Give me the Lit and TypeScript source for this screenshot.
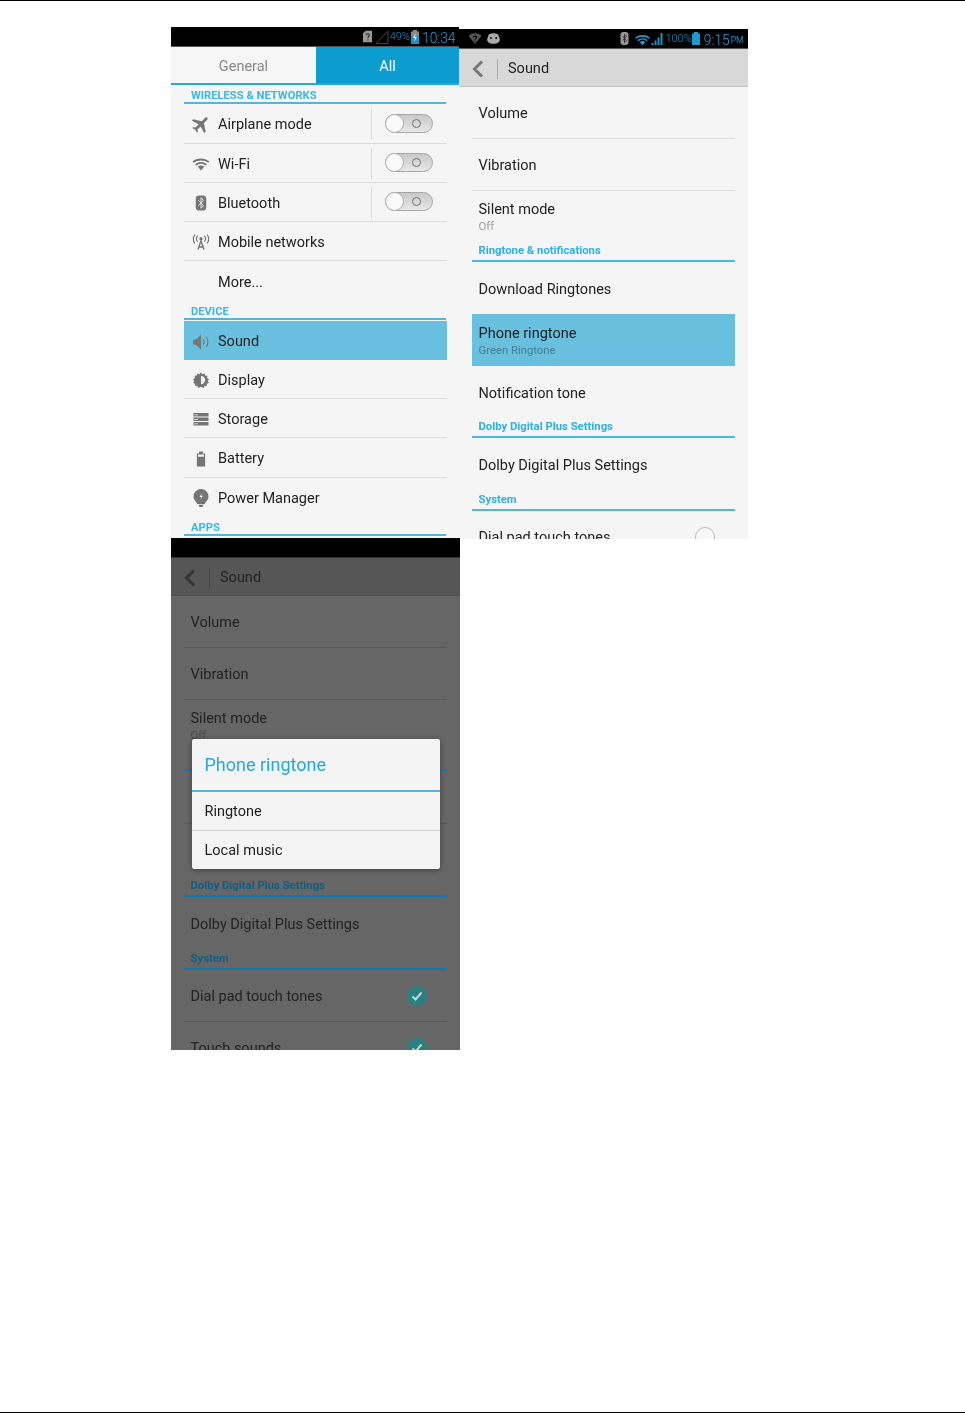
import { LitElement, html, css, svg, nothing } from "lit";
import { customElement } from "lit/decorators.js";

const icons: Record<string, unknown> = {
  plane: svg`<g transform="rotate(45 12 12) translate(12 12) scale(1.12) translate(-12 -12)"><path d="M22.500 17v-2.400L13.700 9V3.300C13.700 2.300 13 1.500 12 1.500s-1.700.8-1.700 1.800V9L1.500 14.600V17l8.800-2.700v5.400L8 21.300v1.500l4-1.100 4 1.100v-1.500l-2.300-1.600v-5.400z"/></g>`,
  wifi: svg`<g fill="none" stroke="currentColor" stroke-width="2.400"><path d="M1.500 9.500C7 4.800 17 4.800 22.500 9.500"/><path d="M4.800 13.200C9 9.800 15 9.800 19.200 13.200"/></g><path d="M7.600 15.400c2.600-1.900 6.200-1.900 8.800 0L12 20.500z"/>`,
  bt: svg`<rect x="5" y="2" width="14" height="20" rx="4.500"/><path d="M8.600 8.400l6.600 7.200-3.200 3.400V5l3.200 3.400-6.600 7.200" fill="none" stroke="#e8e8e8" stroke-width="1.300"/>`,
  mobile: svg`<path d="M12 7.500l5 14.500h-2l-.8-2.500H9.800L9 22H7zM12 12.500l-1.400 5h2.800z"/><circle cx="12" cy="7.500" r="2.200"/><g fill="none" stroke="currentColor" stroke-width="1.500"><path d="M7.500 3.500c-2 2.400-2 5.600 0 8M16.500 3.500c2 2.400 2 5.600 0 8"/><path d="M4 2c-3 3.400-3 8.600 0 12M20 2c3 3.400 3 8.600 0 12"/></g>`,
  sound: svg`<path d="M1.500 8.500h4L12 2v20l-6.500-6.500h-4z"/><g fill="none" stroke="currentColor" stroke-width="1.400"><path d="M15 8.500c1.500 2.200 1.500 4.800 0 7"/><path d="M19 5.500c2.800 4 2.800 9 0 13"/></g>`,
  display: svg`<path d="M12 1.500l2 2.800 2.800-1.100.7 2.900 3 .3-.4 3 2.600 1.600L21 13.300l1.500 2.600-2.700 1.200v3l-3 0L15.500 22.800 12 21l-3.500 1.800-1.300-2.700-3 0v-3L1.500 15.900 3 13.300 1.300 11l2.600-1.600-.4-3 3-.3.7-2.900L10 4.300z"/><path d="M12 6.500a5.500 5.500 0 0 1 0 11z" fill="#f0f0f0"/>`,
  storage: svg`<path d="M2 4h20v4.500H2zM2 10h20v4.500H2zM2 16h20v4.500H2z"/><path d="M3 6h5v1H3zM3 12h5v1H3zM3 18h5v1H3z" fill="#f5f5f5"/>`,
  battery: svg`<path d="M9.500 2h5v2.500h3V22h-11V4.500h3z"/><path d="M8 6h8v3H8z" fill="#f5f5f5"/>`,
  bulb: svg`<path d="M12 0a10 10 0 0 0-10 10c0 3.800 2.200 6 4.500 8.500V20h11v-1.500c2.300-2.500 4.500-4.700 4.500-8.500a10 10 0 0 0-10-10z"/><path d="M8.500 21h7L14 24h-4z"/><path d="M13.500 5l-3.500 5.500h2.500L11 14.500l3.500-5.500H12z" fill="#f5f5f5"/>`,
};

const icon = (n: string) => html`<svg class="ico" viewBox="0 0 24 24" fill="currentColor">${icons[n]}</svg>`;

const rowsWireless = [
  { i: "plane", t: "Airplane mode", sw: true },
  { i: "wifi", t: "Wi-Fi", sw: true },
  { i: "bt", t: "Bluetooth", sw: true },
  { i: "mobile", t: "Mobile networks" },
  { t: "More...", last: true },
];
const rowsDevice = [
  { i: "sound", t: "Sound", on: true },
  { i: "display", t: "Display" },
  { i: "storage", t: "Storage" },
  { i: "battery", t: "Battery" },
  { i: "bulb", t: "Power Manager", last: true },
];

@customElement("app-root")
export class AppRoot extends LitElement {
  static styles = css`
    :host {
      display: block;
      height: 1413px;
      box-sizing: border-box;
      border-top: 1px solid #000;
      border-bottom: 1px solid #000;
      background: #fff;
      font-family: Roboto, "Liberation Sans", sans-serif;
      overflow: hidden;
    }
    .page {
      display: grid;
      grid-template-columns: 288px 289px;
      grid-template-rows: 511px 512px;
      padding: 26px 0 0 171px;
    }
    .screen {
      --bg: #f5f5f5;
      --ink: #222;
      --head: #d8d8d8;
      --head-line: #c4c4c4;
      --chev: #777;
      --bar: #aaa;
      --line: #dcdcdc;
      --sub: #a0a0a0;
      --sec: #2fb0e2;
      --sec-line: #4ab9e6;
      position: relative;
      display: flex;
      flex-direction: column;
      background: var(--bg);
      color: var(--ink);
      overflow: hidden;
      filter: blur(0.35px);
    }
    .two { margin-top: 2px; height: 510px; }
    .three {
      --bg: #666;
      --ink: #222;
      --head: #565656;
      --head-line: #4e4e4e;
      --chev: #333;
      --bar: #444;
      --line: #575757;
      --sub: #4a4a4a;
      --sec: #0f5f85;
      --sec-line: #1577a5;
      width: 289px;
      height: 512px;
    }
    .status {
      flex: none;
      height: 19px;
      border-bottom: 1px solid #555;
      background: #000;
      display: flex;
      align-items: center;
      color: #1d8fc0;
      padding: 0 3.500px 0 9px;
    }
    .three .status { border-bottom-color: #333; }
    .sp { flex: 1; }
    .st { flex: none; display: block; }
    .pct { font-size: 11px; font-weight: 300; }
    .time { font-size: 13.800px; font-weight: 300; color: #2aa0d4; margin-left: 3px; padding-top: 2px; }
    .pm { font-size: 8.500px; margin: 0 1px 0 1px; padding-top: 3px; }
    .tabs { flex: none; height: 36px; display: flex; border-bottom: 2px solid #2aa8d8; }
    .tab {
      display: flex; align-items: center; justify-content: center;
      font-size: 14.500px;
      padding-top: 2px;
    }
    .general { width: 145px; color: #888; background: #f6f6f6; }
    .all { flex: 1; color: #fff; background: #0c9dd0; }
    .sec {
      flex: none;
      margin: 0 13px;
      box-sizing: border-box;
      display: flex;
      align-items: flex-end;
      padding: 0 0 3px 6.500px;
      font-size: 11.300px;
      font-weight: 700;
      line-height: 12px;
      color: var(--sec);
      border-bottom: 2px solid var(--sec-line);
    }
    .sec.caps { height: 19px; margin-bottom: 0.6px; padding-bottom: 0; padding-left: 7px; font-size: 11.200px; color: #3cb7e6; }
    .sec.gap { height: 19.400px; margin-bottom: 1px; }
    .sec.tall { height: 21px; }
    .sec.mid { height: 20px; }
    .row {
      flex: none;
      height: 39.200px;
      box-sizing: border-box;
      margin: 0 12.500px 0 13px;
      padding-top: 2.400px;
      display: flex;
      align-items: center;
      font-size: 14.500px;
      border-bottom: 1px solid #dcdcdc;
    }
    .row.last { border-bottom: 0; }
    .row.on { background: #69bfde; border-bottom: 0; }
    .row.dev { padding-top: 2px; }
    .ico { flex: none; width: 18px; height: 18px; margin: -1px 8.500px 0 7.500px; color: #757575; }
    .dev .ico { margin-top: 0; }
    .blank { flex: none; width: 34px; }
    .lbl { flex: 1; }
    .sep { flex: none; width: 1px; height: 31px; margin-top: -1px; background: #dcdcdc; }
    .toggle {
      flex: none;
      position: relative;
      box-sizing: border-box;
      width: 48px;
      height: 19px;
      margin: -3px 14px 0 13px;
      border-radius: 10px;
      border: 1px solid #a8a8a8;
      background: linear-gradient(#c8c8c8, #e8e8e8);
    }
    .knob {
      position: absolute; left: -1px; top: -1px;
      width: 19px; height: 19px; box-sizing: border-box;
      border-radius: 50%; border: 1px solid #b0b0b0;
      background: #fafafa;
    }
    .ring {
      position: absolute; left: 26px; top: 4px;
      width: 9px; height: 9px; box-sizing: border-box;
      border-radius: 50%; border: 1.500px solid #707070;
    }
    .head {
      flex: none;
      height: 38px;
      box-sizing: border-box;
      padding-top: 2px;
      background: var(--head);
      border-bottom: 1px solid var(--head-line);
      display: flex;
      align-items: center;
      font-size: 14.500px;
    }
    .chev { flex: none; width: 12px; height: 18px; margin: 0 13px 0 13px; color: var(--chev); }
    .bar { flex: none; width: 1px; height: 20px; background: var(--bar); margin-right: 10px; }
    .item {
      flex: none;
      height: 52px;
      box-sizing: border-box;
      margin: 0 13px;
      padding: 2px 20px 0 6.500px;
      display: flex;
      align-items: center;
      font-size: 14.500px;
      border-bottom: 1px solid var(--line);
    }
    .item.plain { border-bottom: 0; }
    .item.hi { background: #69bfde; border-bottom: 0; }
    .item.silent { height: 50px; }
    .item.tall { height: 53px; }
    .col { flex: 1; display: flex; flex-direction: column; }
    .sub { font-size: 11.300px; color: var(--sub); margin-top: 2px; line-height: 13px; }
    .hi .sub { color: #457f96; }
    .tt { line-height: 17px; }
    .box {
      flex: none; width: 20px; height: 20px; box-sizing: border-box;
      margin-top: -2px;
      border-radius: 50%; border: 1px solid #b8b8b8; background: #f8f8f8;
      display: flex; align-items: center; justify-content: center;
    }
    .box.checked { border: 0; background: #2a8080; }
    .box svg { width: 12px; height: 12px; }
    .dialog {
      position: absolute;
      left: 20.500px; top: 201px;
      width: 248.500px;
      height: 130px;
      color: #222;
      background: #f4f4f4;
      border-radius: 2px;
      box-shadow: 0 1px 5px rgba(0, 0, 0, 0.4);
      display: flex;
      flex-direction: column;
    }
    .dt {
      flex: none; height: 53px; box-sizing: border-box;
      padding-left: 13px;
      display: flex; align-items: center;
      font-size: 18px;
      color: #25a9db;
      border-bottom: 2px solid #4ab9e6;
    }
    .di {
      flex: 1; display: flex; align-items: center;
      padding-left: 13px;
      font-size: 14.500px;
    }
    .di + .di { border-top: 1px solid #d2d2d2; }
  `;

  private statusOne() {
    return html`<div class="status">
      <span class="sp"></span>
      <svg class="st" width="9" height="13" viewBox="0 0 10 13"><path d="M0 3l3-3h7v13H0z" fill="#999"/><path d="M3.500 5c0-2 3.500-2 3.500 0 0 1.500-1.500 1.500-1.500 3M5.500 9.500v1.500" stroke="#222" fill="none" stroke-width="1.200"/></svg>
      <svg class="st" width="14" height="14" viewBox="0 0 14 14" style="margin-left:3px"><path d="M1 13.500L13 1v12.500z" fill="none" stroke="#444"/></svg>
      <span class="pct" style="margin-left:1px">49%</span>
      <svg class="st" width="8" height="14" viewBox="0 0 8 14" style="margin-left:1px"><path d="M2 0h4v1.500h2V14H0V1.500h2z" fill="#888"/><path d="M0 6h8v8H0z" fill="#1d8fc0"/><path d="M4.800 3L2 8h2l-1 4 3-5H4z" fill="#eee"/></svg>
      <span class="time">10:34</span>
    </div>`;
  }

  private statusTwo() {
    return html`<div class="status">
      <svg class="st" width="14" height="11" viewBox="0 0 24 20"><path d="M0 5c7-6 17-6 24 0L12 20z" fill="#555"/><path d="M9 8c0-3 6-3 6 0 0 2-3 2-3 4M12 14v2" stroke="#000" fill="none" stroke-width="2"/></svg>
      <svg class="st" width="15" height="11" viewBox="0 0 14 10" style="margin-left:4px"><path d="M2 3c0-2 2-3 5-3s5 1 5 3l1 3c0 2-2 4-6 4S1 8 1 6z" fill="#aaa"/><circle cx="4.500" cy="4.500" r=".9" fill="#000"/><circle cx="9.500" cy="4.500" r=".9" fill="#000"/></svg>
      <span class="sp"></span>
      <svg class="st" width="9" height="13" viewBox="0 0 24 39"><rect width="24" height="39" rx="9" fill="#999"/><path d="M6 13l12 13-6 6V7l6 6L6 26" fill="none" stroke="#222" stroke-width="2.500"/></svg>
      <svg class="st" width="17" height="13" viewBox="0 0 24 20" style="margin-left:5px;color:#1d9bd0" fill="currentColor">${icons.wifi}</svg>
      <svg class="st" width="13" height="12" viewBox="0 0 12 12"><path d="M0 12h2V10H0zM3 12h2V7.500H3zM6 12h2V4.500H6zM9 12h2V0H9z" fill="#1d8fc0"/></svg>
      <span class="pct" style="margin-left:1px">100%</span>
      <svg class="st" width="8" height="13" viewBox="0 0 8 13"><path d="M2 0h4v1.500h2V13H0V1.500h2z" fill="#1d9bd0"/></svg>
      <span class="time" style="margin-left:4px">9:15</span><span class="pm">PM</span>
    </div>`;
  }

  private box(checked: boolean) {
    return html`<span class="box ${checked ? "checked" : ""}">${checked
      ? html`<svg viewBox="0 0 12 12"><path d="M1.500 6.500l3 3 6-7" fill="none" stroke="#c4d8d8" stroke-width="2"/></svg>`
      : nothing}</span>`;
  }

  private detail(dim: boolean) {
    return html`
      <div class="head">
        <svg class="chev" viewBox="0 0 12 18"><path d="M10 1.500L2.500 9l7.500 7.500" fill="none" stroke="currentColor" stroke-width="3"/></svg>
        <span class="bar"></span>
        <span>Sound</span>
      </div>
      <div class="item">Volume</div>
      <div class="item">Vibration</div>
      <div class="item plain silent"><div class="col"><span class="tt">Silent mode</span><span class="sub">Off</span></div></div>
      ${dim
        ? html`<div class="sec tall"></div>
            <div class="item tall"></div>
            <div class="item plain tall"></div>`
        : html`<div class="sec tall">Ringtone &amp; notifications</div>
            <div class="item plain">Download Ringtones</div>
            <div class="item hi"><div class="col"><span class="tt">Phone ringtone</span><span class="sub">Green Ringtone</span></div></div>
            <div class="item plain">Notification tone</div>`}
      <div class="sec mid">Dolby Digital Plus Settings</div>
      <div class="item plain">Dolby Digital Plus Settings</div>
      <div class="sec tall">System</div>
      <div class="item"><span class="col">Dial pad touch tones</span>${this.box(dim)}</div>
      <div class="item"><span class="col">Touch sounds</span>${this.box(dim)}</div>`;
  }

  private row(r: { i?: string; t: string; sw?: boolean; on?: boolean; last?: boolean }, dev: boolean) {
    return html`<div class="row ${r.last ? "last" : ""} ${r.on ? "on" : ""} ${dev ? "dev" : ""}">
      ${r.i ? icon(r.i) : html`<span class="blank"></span>`}
      <span class="lbl">${r.t}</span>
      ${r.sw
        ? html`<span class="sep"></span><span class="toggle"><span class="knob"></span><span class="ring"></span></span>`
        : nothing}
    </div>`;
  }

  render() {
    return html`<div class="page">
      <section class="screen">
        ${this.statusOne()}
        <div class="tabs">
          <div class="tab general">General</div>
          <div class="tab all">All</div>
        </div>
        <div class="sec caps">WIRELESS &amp; NETWORKS</div>
        ${rowsWireless.map((r) => this.row(r, false))}
        <div class="sec caps gap">DEVICE</div>
        ${rowsDevice.map((r) => this.row(r, true))}
        <div class="sec caps">APPS</div>
      </section>
      <section class="screen two">
        ${this.statusTwo()}
        ${this.detail(false)}
      </section>
      <section class="screen three">
        <div class="status"></div>
        ${this.detail(true)}
        <div class="dialog">
          <div class="dt">Phone ringtone</div>
          <div class="di">Ringtone</div>
          <div class="di">Local music</div>
        </div>
      </section>
    </div>`;
  }
}
